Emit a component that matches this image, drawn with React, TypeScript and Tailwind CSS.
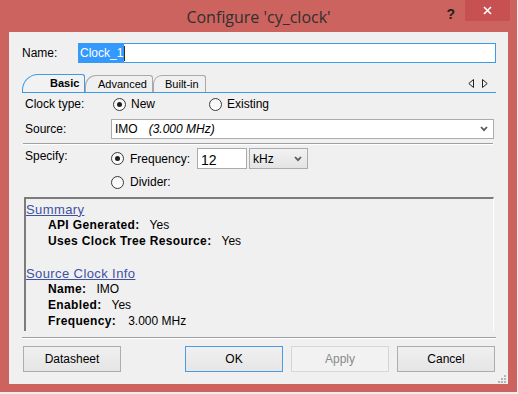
import React from "react";

function Radio({ checked }: { checked?: boolean }) {
    return (
        <span className="w-[13px] h-[13px] shrink-0 rounded-full border border-[#3a3a3a] bg-gradient-to-b from-[#f4f4f4] to-[#ffffff] flex items-center justify-center">
            {checked && <span className="w-[5px] h-[5px] rounded-full bg-[#1e1e1e]" />}
        </span>
    );
}

function Chevron() {
    return (
        <svg width="8" height="6" viewBox="0 0 8 6" className="shrink-0">
            <path d="M1 1 L4 4.2 L7 1" fill="none" stroke="#5a5a5a" strokeWidth="1.8" />
        </svg>
    );
}

function Btn({ label, kind = "normal" }: { label: string; kind?: "normal" | "default" | "disabled" }) {
    const look =
        kind === "default"
            ? "border-[#4a9ae6] bg-gradient-to-b from-[#f0f0f0] to-[#e6e6e6] text-black"
            : kind === "disabled"
              ? "border-[#d6d6d6] bg-[#f2f2f2] text-[#8a8a8a]"
              : "border-[#adadad] bg-gradient-to-b from-[#f0f0f0] to-[#e5e5e5] text-black";
    return (
        <div className={`w-[98px] h-[26px] border flex items-center justify-center ${look}`}>{label}</div>
    );
}

export default function App() {
    return (
        <div className="w-[518px] h-[394px] bg-[#eeeeee] font-['Liberation_Sans',Arial,sans-serif] text-[12px] text-black leading-none">
            <div className="w-[517px] h-[392px] bg-[#cd635e] flex flex-col">
                {/* title bar */}
                <div className="h-[32px] grid grid-cols-[1fr_auto_1fr]">
                    <div />
                    <div className="flex items-center pt-[1px] font-['Open_Sans',sans-serif] text-[16px] text-[#303030]">
                        Configure 'cy_clock'
                    </div>
                    <div className="flex justify-end items-start pr-[7px]">
                        <span className="mt-[7px] mr-[10px] font-bold text-[14px] text-[#202020]">?</span>
                        <div className="w-[45px] h-[21px] bg-[#c75050] flex items-center justify-center">
                            <svg width="9" height="9" viewBox="0 0 9 9">
                                <path d="M1 1 L8 8 M8 1 L1 8" stroke="#ffffff" strokeWidth="1.6" />
                            </svg>
                        </div>
                    </div>
                </div>

                {/* client area */}
                <div className="relative mx-[9px] h-[352px] bg-[#f0f0f0] flex flex-col">
                    <div className="mt-[11px] h-[20px] flex items-center pl-[13px] pr-[12px]">
                        <span className="w-[56px]">Name:</span>
                        <div className="flex-1 h-[20px] border border-[#3c9be8] bg-white flex items-center">
                            <span className="h-[18px] bg-[#3399ff] text-white flex items-center pl-[1px] pr-[1px]">Clock_1</span>
                            <span className="w-[1px] h-[15px] bg-[#3a2a10]" />
                        </div>
                    </div>

                    {/* tabs */}
                    <div className="mt-[11px] mx-[13px] mr-[12px] h-[19px] flex items-end border-b border-[#3c9be8] text-[11px]">
                        <div className="w-[63px] h-[18px] border border-b-0 border-[#3c9be8] rounded-tl-[16px] rounded-tr-[3px] bg-[#f2f2f2] flex items-center pl-[27px] font-bold">
                            Basic
                        </div>
                        <div className="w-[68px] h-[17px] border border-b-0 border-[#a9a9a9] rounded-tl-[11px] rounded-tr-[3px] flex items-center pl-[12px]">
                            Advanced
                        </div>
                        <div className="w-[53px] h-[17px] border border-b-0 border-[#a9a9a9] rounded-tl-[9px] rounded-tr-[3px] flex items-center pl-[11px]">
                            Built-in
                        </div>
                        <div className="ml-auto mr-[8px] self-center flex gap-[8px]">
                            <svg width="6" height="9" viewBox="0 0 6 9">
                                <path d="M5.5 0.5 L0.8 4.5 L5.5 8.5 Z" fill="none" stroke="#222" strokeWidth="1" />
                            </svg>
                            <svg width="6" height="9" viewBox="0 0 6 9">
                                <path d="M0.5 0.5 L5.2 4.5 L0.5 8.5 Z" fill="none" stroke="#222" strokeWidth="1" />
                            </svg>
                        </div>
                    </div>

                    <div className="h-[22px] flex items-center pl-[16px]">
                        <span className="w-[88px]">Clock type:</span>
                        <div className="w-[96px] flex items-center gap-[5px]">
                            <Radio checked />
                            <span>New</span>
                        </div>
                        <div className="flex items-center gap-[5px]">
                            <Radio />
                            <span>Existing</span>
                        </div>
                    </div>

                    <div className="mt-[4px] h-[20px] flex items-center pl-[16px] pr-[14px]">
                        <span className="w-[86px]">Source:</span>
                        <div className="flex-1 h-[20px] border border-[#ababab] bg-white flex items-center pl-[3px] pr-[5px]">
                            <span>IMO</span>
                            <span className="ml-[11px] italic">(3.000 MHz)</span>
                            <span className="ml-auto"><Chevron /></span>
                        </div>
                    </div>

                    <div className="mt-[4px] ml-[14px] mr-[15px] border-t border-[#a0a0a0] border-b border-b-white" />

                    <div className="mt-[3px] h-[21px] flex items-center pl-[16px]">
                        <span className="w-[86px] self-start mt-[2px]">Specify:</span>
                        <div className="w-[86px] flex items-center gap-[6px]">
                            <Radio checked />
                            <span>Frequency:</span>
                        </div>
                        <div className="w-[50px] h-[21px] border border-[#ababab] bg-white flex items-center pl-[3px] pt-[2px] text-[14px]">
                            12
                        </div>
                        <div className="ml-[2px] w-[59px] h-[21px] border border-[#acacac] bg-gradient-to-b from-[#f2f2f2] to-[#e4e4e4] flex items-center pl-[3px] pr-[5px]">
                            <span>kHz</span>
                            <span className="ml-auto"><Chevron /></span>
                        </div>
                    </div>

                    <div className="mt-[3px] h-[20px] flex items-center pl-[102px]">
                        <div className="flex items-center gap-[6px]">
                            <Radio />
                            <span>Divider:</span>
                        </div>
                    </div>

                    {/* summary panel */}
                    <div className="mt-[5px] ml-[15px] w-[470px] h-[134px] border-t-2 border-l-2 border-[#7c7c7c] border-r border-r-white pt-[2px] flex flex-col">
                        <div className="h-[16px] flex items-center text-[13px] text-[#3f51a3] underline tracking-[0.4px]">Summary</div>
                        <div className="h-[16px] flex items-center pl-[22px] gap-[10px]">
                            <span className="font-bold tracking-[0.35px]">API Generated:</span>
                            <span>Yes</span>
                        </div>
                        <div className="h-[16px] flex items-center pl-[22px] gap-[10px]">
                            <span className="font-bold tracking-[0.35px]">Uses Clock Tree Resource:</span>
                            <span>Yes</span>
                        </div>
                        <div className="h-[16px]" />
                        <div className="h-[16px] flex items-center text-[13px] text-[#3f51a3] underline tracking-[0.4px]">Source Clock Info</div>
                        <div className="h-[16px] flex items-center pl-[22px] gap-[10px]">
                            <span className="font-bold tracking-[0.35px]">Name:</span>
                            <span>IMO</span>
                        </div>
                        <div className="h-[16px] flex items-center pl-[22px] gap-[10px]">
                            <span className="font-bold tracking-[0.35px]">Enabled:</span>
                            <span>Yes</span>
                        </div>
                        <div className="h-[16px] flex items-center pl-[22px] gap-[12px]">
                            <span className="font-bold tracking-[0.35px]">Frequency:</span>
                            <span>3.000 MHz</span>
                        </div>
                    </div>

                    <div className="mt-[6px] ml-[13px] mr-[12px] border-t border-[#a0a0a0] border-b border-b-white" />

                    <div className="mt-[7px] flex pl-[14px] pr-[13px]">
                        <Btn label="Datasheet" />
                        <div className="flex-1" />
                        <div className="flex gap-[8px]">
                            <Btn label="OK" kind="default" />
                            <Btn label="Apply" kind="disabled" />
                            <Btn label="Cancel" />
                        </div>
                    </div>

                    {/* resize grip */}
                    <svg width="8" height="8" viewBox="0 0 8 8" className="absolute right-[2px] bottom-[1px]">
                        <rect x="6" y="0" width="2" height="2" fill="#b4b4b4" />
                        <rect x="3" y="3" width="2" height="2" fill="#b4b4b4" />
                        <rect x="6" y="3" width="2" height="2" fill="#b4b4b4" />
                        <rect x="0" y="6" width="2" height="2" fill="#b4b4b4" />
                        <rect x="3" y="6" width="2" height="2" fill="#b4b4b4" />
                        <rect x="6" y="6" width="2" height="2" fill="#b4b4b4" />
                    </svg>
                </div>
            </div>
        </div>
    );
}
